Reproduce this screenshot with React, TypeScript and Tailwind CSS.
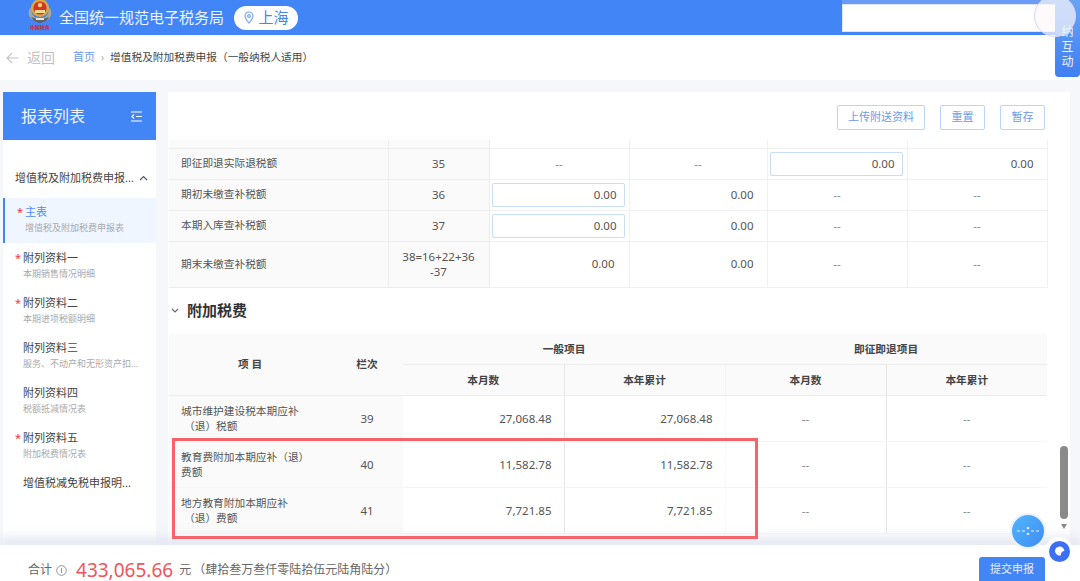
import React from "react";

const font = { fontFamily: '"Noto Sans","Noto Sans CJK SC",sans-serif' };

function Emblem() {
  return (
    <div className="w-[24px] h-[35px] flex flex-col items-center overflow-hidden">
      <svg className="shrink-0" width="24" height="23" viewBox="0 0 24 23">
        <path d="M2 8c-3 5-1 11 5 13h10c6-2 8-8 5-13l-2 1c1 4-1 8-5 9H9c-4-1-6-5-5-9z" fill="#a9a596" />
        <circle cx="12" cy="8" r="9" fill="#d9a93f" />
        <circle cx="12" cy="8" r="6.600" fill="#d2352a" />
        <path d="M7 10h10v3H7z" fill="#f0d98f" />
        <circle cx="12" cy="5" r="2.200" fill="#f6d35f" />
        <path d="M3 17l9 3 9-3-3 4-6 2-6-2z" fill="#5f6368" />
        <path d="M8 18h8v2H8z" fill="#e8e6df" />
      </svg>
      <span className="text-[5px] leading-[7px] text-[#d4282a] font-bold whitespace-nowrap mt-[1px]">中国税务</span>
    </div>
  );
}

function Star() {
  return <span className="text-[#f5333f] text-[11px] leading-none">*</span>;
}

function SideItem({ title, sub, star }: { title: string; sub?: string; star?: boolean }) {
  return (
    <div className="h-[45px] pl-[12px] pr-[3px] flex flex-col pt-[6px]">
      <div className="flex items-center h-[18px] text-[11px] text-[#444]">
        <span className="w-[8px] shrink-0">{star && <Star />}</span>
        <span className="truncate">{title}</span>
      </div>
      <div className="pl-[8px] h-[14px] leading-[14px] text-[9px] text-[#aaa] truncate">{sub}</div>
    </div>
  );
}

function Input({ v }: { v: string }) {
  return (
    <div className="h-[24px] ml-[2px] mr-[4px] px-[7px] border border-[#c9dcfb] rounded-[2px] bg-white flex items-center justify-end text-[#555]">
      {v}
    </div>
  );
}

const th = "border-r border-b border-[#ececec] bg-[#fafafa]";
const td = "border-r border-b border-[#f0f0f0]";
const lab = "text-[10.7px]";

function Table1() {
  const dash = <span className="text-[#888]">--</span>;
  return (
    <table className="table-fixed border-collapse w-[878px] text-[11.5px] text-[#555] ml-[1px]">
      <colgroup>
        <col className="w-[219px]" />
        <col className="w-[101px]" />
        <col className="w-[140px]" />
        <col className="w-[138px]" />
        <col className="w-[140px]" />
        <col className="w-[140px]" />
      </colgroup>
      <tbody>
        <tr className="h-[8px]">
          <td className={th} /><td className={th} /><td className={td} /><td className={td} /><td className={td} /><td className={td} />
        </tr>
        <tr className="h-[31px]">
          <td className={`${th} ${lab} pl-[12px]`}>即征即退实际退税额</td>
          <td className={`${th} text-center`}>35</td>
          <td className={`${td} text-center`}>{dash}</td>
          <td className={`${td} text-center`}>{dash}</td>
          <td className={td}><Input v="0.00" /></td>
          <td className={`${td} text-right pr-[13px]`}>0.00</td>
        </tr>
        <tr className="h-[31px]">
          <td className={`${th} ${lab} pl-[12px]`}>期初未缴查补税额</td>
          <td className={`${th} text-center`}>36</td>
          <td className={td}><Input v="0.00" /></td>
          <td className={`${td} text-right pr-[13px]`}>0.00</td>
          <td className={`${td} text-center`}>{dash}</td>
          <td className={`${td} text-center`}>{dash}</td>
        </tr>
        <tr className="h-[31px]">
          <td className={`${th} ${lab} pl-[12px]`}>本期入库查补税额</td>
          <td className={`${th} text-center`}>37</td>
          <td className={td}><Input v="0.00" /></td>
          <td className={`${td} text-right pr-[13px]`}>0.00</td>
          <td className={`${td} text-center`}>{dash}</td>
          <td className={`${td} text-center`}>{dash}</td>
        </tr>
        <tr className="h-[46px]">
          <td className={`${th} ${lab} pl-[12px]`}>期末未缴查补税额</td>
          <td className={`${th} text-center leading-[15px] px-[10px]`}>38=16+22+36<br />-37</td>
          <td className={`${td} text-right pr-[14px]`}>0.00</td>
          <td className={`${td} text-right pr-[13px]`}>0.00</td>
          <td className={`${td} text-center`}>{dash}</td>
          <td className={`${td} text-center`}>{dash}</td>
        </tr>
      </tbody>
    </table>
  );
}

function Row2({ l, n, a, b }: { l: React.ReactNode; n: string; a: string; b: string }) {
  const dash = <span className="text-[#888]">--</span>;
  return (
    <tr className="h-[46px]">
      <td className={`bg-[#fafafa] border-b border-[#f5f5f5] pl-[12px] leading-[15px] ${lab}`}>{l}</td>
      <td className="bg-[#fafafa] border-b border-[#f5f5f5] text-center">{n}</td>
      <td className="border-r border-b border-r-[#e6e6e6] border-b-[#f5f5f5] text-right pr-[12px]">{a}</td>
      <td className="border-r border-b border-r-[#f8f8f8] border-b-[#f5f5f5] text-right pr-[12px]">{b}</td>
      <td className="border-r border-b border-r-[#e6e6e6] border-b-[#f5f5f5] text-center">{dash}</td>
      <td className="border-b border-[#f5f5f5] text-center">{dash}</td>
    </tr>
  );
}

function Table2() {
  const h = "bg-[#fafafa] font-bold text-[#444] text-center text-[10.7px] border-b border-[#ececec]";
  return (
    <table className="table-fixed border-collapse w-[878px] text-[11.5px] text-[#555] ml-[1px]">
      <colgroup>
        <col className="w-[162px]" />
        <col className="w-[72px]" />
        <col className="w-[161px]" />
        <col className="w-[161px]" />
        <col className="w-[161px]" />
        <col className="w-[161px]" />
      </colgroup>
      <thead>
        <tr className="h-[31px]">
          <th rowSpan={2} className={h}>项 目</th>
          <th rowSpan={2} className={h}>栏次</th>
          <th colSpan={2} className={h}>一般项目</th>
          <th colSpan={2} className={h}>即征即退项目</th>
        </tr>
        <tr className="h-[31px]">
          <th className={`${h} border-r border-r-[#e6e6e6]`}>本月数</th>
          <th className={`${h} border-r border-r-[#f5f5f5]`}>本年累计</th>
          <th className={`${h} border-r border-r-[#e6e6e6]`}>本月数</th>
          <th className={h}>本年累计</th>
        </tr>
      </thead>
      <tbody>
        <Row2 l={<>城市维护建设税本期应补<br /><span className="pl-[3px]">（退）税额</span></>} n="39" a="27,068.48" b="27,068.48" />
        <Row2 l={<>教育费附加本期应补（退）<br />费额</>} n="40" a="11,582.78" b="11,582.78" />
        <Row2 l={<>地方教育附加本期应补<br /><span className="pl-[3px]">（退）费额</span></>} n="41" a="7,721.85" b="7,721.85" />
      </tbody>
    </table>
  );
}

function Btn({ children, w }: { children: React.ReactNode; w: string }) {
  return (
    <div className={`${w} h-[25px] border border-[#bcd4fb] rounded-[2px] flex items-center justify-center text-[11px] text-[#6b9bf0]`}>
      {children}
    </div>
  );
}

export default function App() {
  return (
    <div style={font} className="relative w-[1080px] h-[581px] overflow-hidden flex flex-col bg-[#f5f7fa]">
      <header className="h-[35px] shrink-0 bg-[#4285f7] flex items-center pl-[28px] text-white">
        <Emblem />
        <span className="ml-[7px] text-[15px] text-[#eef4ff]">全国统一规范电子税务局</span>
        <div className="ml-[10px] w-[64px] h-[24px] rounded-full bg-white flex items-center justify-center gap-[5px] text-[#4285f7] text-[15px]">
          <svg width="10" height="13" viewBox="0 0 10 13" fill="none" stroke="#7aa7f5" strokeWidth="1.2">
            <path d="M5 12C3 9.500 1 7.400 1 5a4 4 0 0 1 8 0c0 2.400-2 4.500-4 7z" />
            <circle cx="5" cy="5" r="1.400" />
          </svg>
          <span>上海</span>
        </div>
      </header>

      <div className="h-[45px] shrink-0 bg-white flex items-center text-[10.700px]">
        <svg className="ml-[6px]" width="13" height="12" viewBox="0 0 13 12" fill="none" stroke="#c4c4c4" strokeWidth="1.200">
          <path d="M12.500 6H1M6 1L1 6l5 5" />
        </svg>
        <span className="ml-[8px] text-[14px] text-[#c2c2c2]">返回</span>
        <span className="ml-[18px] text-[11px] text-[#6e9bec]">首页</span>
        <span className="mx-[6px] text-[#aaa] text-[10px]">›</span>
        <span className="text-[#444] whitespace-nowrap">增值税及附加税费申报（一般纳税人适用）</span>
      </div>

      <div className="flex-1 min-h-0 flex pt-[12px] pl-[3px] gap-[12px]">
        <aside className="w-[153px] shrink-0 bg-white overflow-hidden">
          <div className="h-[48px] bg-[#4285f4] flex items-center justify-between pl-[18px] pr-[14px] text-[16px] text-[#eef4ff]">
            <span>报表列表</span>
            <svg width="11" height="11" viewBox="0 0 11 11" fill="none" stroke="#fff" strokeWidth="1.200">
              <path d="M0 1h11M5 5.500h6M0 10h11M3 3.500L1 5.500l2 2" />
            </svg>
          </div>
          <div className="h-[58px] flex items-center pl-[12px] pr-[8px] pt-[18px] text-[11px] text-[#444]">
            <span className="whitespace-nowrap flex-1">增值税及附加税费申报...</span>
            <svg className="ml-[5px] shrink-0" width="9" height="6" viewBox="0 0 9 6" fill="none" stroke="#555" strokeWidth="1.100">
              <path d="M1 5l3.500-3.500L8 5" />
            </svg>
          </div>
          <div className="h-[45px] bg-[#f0f6ff] border-l-2 border-[#4285f4] pl-[12px] pr-[3px] flex flex-col pt-[5px]">
            <div className="flex items-center h-[18px] text-[11px] text-[#4f8bf5]">
              <span className="w-[8px] shrink-0"><Star /></span>主表
            </div>
            <div className="pl-[8px] h-[14px] leading-[14px] text-[9px] text-[#aaa] truncate">增值税及附加税费申报表</div>
          </div>
          <SideItem star title="附列资料一" sub="本期销售情况明细" />
          <SideItem star title="附列资料二" sub="本期进项税额明细" />
          <SideItem title="附列资料三" sub="服务、不动产和无形资产扣..." />
          <SideItem title="附列资料四" sub="税额抵减情况表" />
          <SideItem star title="附列资料五" sub="附加税费情况表" />
          <SideItem title="增值税减免税申报明..." />
        </aside>

        <main className="w-[902px] shrink-0 bg-white overflow-hidden">
          <div className="h-[48px] flex items-start justify-end gap-[15px] pt-[13px] pr-[25px]">
            <Btn w="w-[88px]">上传附送资料</Btn>
            <Btn w="w-[45px]">重置</Btn>
            <Btn w="w-[45px]">暂存</Btn>
          </div>
          <Table1 />
          <div className="h-[46px] flex items-center pl-[3px]">
            <svg width="8" height="5" viewBox="0 0 8 5" fill="none" stroke="#666" strokeWidth="1.100">
              <path d="M1 1l3 3 3-3" />
            </svg>
            <span className="ml-[8px] text-[15px] font-bold text-[#333]">附加税费</span>
          </div>
          <Table2 />
        </main>
      </div>

      <footer className="relative z-10 h-[36px] shrink-0 bg-white shadow-[0_-8px_10px_rgba(225,228,240,0.85)] flex items-start pl-[28px] pr-[35px] pt-[13px] text-[12px] text-[#666]">
        <span className="leading-[24px]">合计</span>
        <svg className="ml-[4px] mt-[7px]" width="11" height="11" viewBox="0 0 11 11" fill="none" stroke="#888" strokeWidth="0.900">
          <circle cx="5.500" cy="5.500" r="4.800" />
          <path d="M5.500 3v5" />
        </svg>
        <span className="ml-[9px] text-[#f0555a] text-[19px] leading-[24px]">433,065.66</span>
        <span className="ml-[6px] leading-[24px]">元</span>
        <span className="ml-[2px] leading-[24px] whitespace-nowrap">（肆拾叁万叁仟零陆拾伍元陆角陆分）</span>
        <div className="ml-auto mt-[-1px] w-[66px] h-[24px] rounded-t-[3px] bg-[#4285f4] text-[#e8f0ff] text-[11px] flex items-center justify-center">提交申报</div>
      </footer>

      {/* overlays */}
      <div className="absolute left-[172px] top-[438px] w-[586px] h-[101px] border-[3px] border-[#f4646a] z-20" />

      <div className="absolute left-[842px] top-0 w-[220px] h-[4px] bg-[#6a9cf7] z-20" />
      <div className="absolute left-[842px] top-[4px] w-[220px] h-[28px] bg-white border border-[#dce8fd] z-20" />
      <div className="absolute left-[1055px] top-0 w-[25px] h-[77px] rounded-b-[4px] bg-gradient-to-b from-[#6aa3f5] to-[#3f7ff0] z-20" />
      <div className="absolute left-[1034px] top-[-5px] w-[42px] h-[42px] rounded-full bg-[#fdf8fb]/70 border border-[#d9d6f5] z-30" />
      <div className="absolute left-[1055px] top-[24px] w-[25px] text-[#eef4ff] text-[12px] leading-[15px] flex flex-col items-center z-40">
        <span>纳</span><span>互</span><span>动</span>
      </div>

      <div className="absolute left-[1060px] top-[446px] w-[8px] h-[73px] rounded-full bg-[#8a8a8a] z-20" />
      <div className="absolute left-[1061px] top-[524px] w-0 h-0 border-x-[3.500px] border-x-transparent border-t-[5px] border-t-[#8a8a8a] z-20" />

      <div className="absolute left-[1010px] top-[513px] w-[36px] h-[36px] rounded-full bg-gradient-to-br from-[#55b5fb] to-[#3d8df5] border-2 border-[#eef3fb] flex items-center justify-center z-30">
        <svg width="24" height="8" viewBox="0 0 24 8" stroke="#e6f3ff" strokeWidth="1" fill="#e6f3ff">
          <path d="M1 4h3M6 4h3M15 4h3M20 4h3" />
          <circle cx="12" cy="1" r="0.900" />
          <circle cx="12" cy="7" r="0.900" />
        </svg>
      </div>
      <div className="absolute left-[1045px] top-[537px] w-[28px] h-[28px] rounded-full bg-white flex items-center justify-center z-30">
        <svg width="21" height="21" viewBox="0 0 21 21">
          <circle cx="10.500" cy="10.500" r="10.500" fill="#3d6ff2" />
          <path d="M6 10.500a4.700 4.700 0 0 1 9.400-.5c-2 0-3.300 1-3.700 4.400A4.800 4.800 0 0 1 6 10.500z" fill="#fff" />
        </svg>
      </div>
    </div>
  );
}
